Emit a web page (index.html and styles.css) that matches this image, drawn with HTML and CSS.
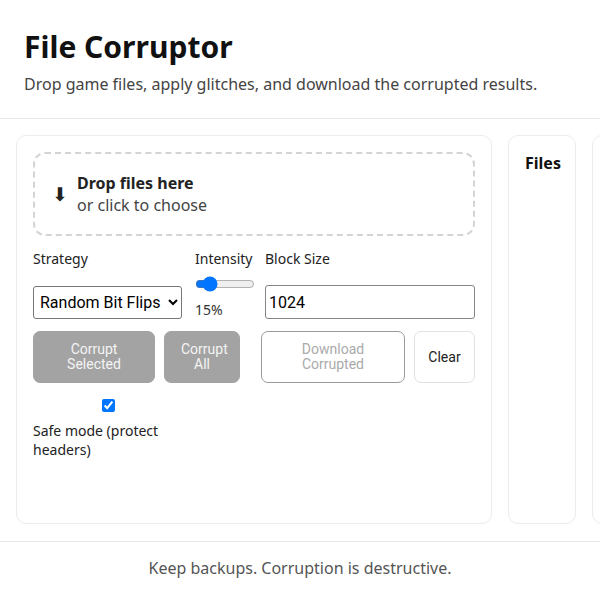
FILE: index.html
```html
<!DOCTYPE html>
<html lang="en">
<head>
<meta charset="utf-8">
<title>File Corruptor</title>
<link rel="stylesheet" href="styles.css">
</head>
<body>
<header class="app-header">
  <h1 class="title">File Corruptor</h1>
  <p class="subtitle">Drop game files, apply glitches, and download the corrupted results.</p>
</header>
<main class="layout">
  <section class="card card-main">
    <div class="dropzone">
      <span class="drop-icon">⬇</span>
      <div class="drop-text">
        <strong class="drop-title">Drop files here</strong>
        <span class="drop-sub">or click to choose</span>
      </div>
    </div>
    <div class="row fields">
      <label class="field field-strategy">
        <span class="field-label">Strategy</span>
        <select class="select">
          <option>Random Bit Flips</option>
        </select>
      </label>
      <label class="field field-intensity">
        <span class="field-label">Intensity</span>
        <input class="range" type="range" min="0" max="100" value="15">
        <span class="range-value">15%</span>
      </label>
      <label class="field field-block">
        <span class="field-label">Block Size</span>
        <input class="text-input" type="text" value="1024">
      </label>
    </div>
    <div class="row actions">
      <button class="btn btn-primary btn-sel" disabled>Corrupt Selected</button>
      <button class="btn btn-primary btn-all" disabled>Corrupt All</button>
      <button class="btn btn-outline btn-dl" disabled>Download Corrupted</button>
      <button class="btn btn-light btn-clear">Clear</button>
    </div>
    <div class="row options">
      <label class="safe">
        <input class="check" type="checkbox" checked>
        <span class="safe-text">Safe mode (protect headers)</span>
      </label>
    </div>
  </section>
  <section class="card card-files">
    <h2 class="card-title">Files</h2>
  </section>
  <section class="card card-extra"></section>
</main>
<footer class="app-footer">Keep backups. Corruption is destructive.</footer>
</body>
</html>
```
FILE: styles.css
```css
html, body {
  margin: 0;
  padding: 0;
}
body {
  font-family: "Noto Sans", "Open Sans", sans-serif;
  color: #111;
  background: #fff;
  min-height: 100vh;
  display: flex;
  flex-direction: column;
  overflow: hidden;
}
.app-header {
  padding: 27px 24px 22px;
  border-bottom: 1px solid #e6e6e6;
}
.title {
  margin: 0;
  font-size: 30px;
  line-height: 40px;
  font-weight: 700;
}
.subtitle {
  margin: 5px 0 0;
  font-size: 16px;
  line-height: 24px;
  color: #444;
}
.layout {
  flex: 1;
  display: grid;
  grid-template-columns: 476px 68px 200px;
  gap: 16px;
  padding: 16px 16px 17px;
}
.card {
  border: 1px solid #ececec;
  border-radius: 10px;
  padding: 16px;
}
.card-main {
  display: flex;
  flex-direction: column;
  gap: 12px;
}
.card-title {
  margin: 0;
  font-size: 16px;
  line-height: 22px;
  font-weight: 700;
}
.dropzone {
  border: 2px dashed #d4d4d4;
  border-radius: 12px;
  padding: 18px 17px;
  display: flex;
  align-items: center;
  gap: 9px;
  margin-bottom: 1px;
}
.drop-icon {
  font-size: 19px;
  line-height: 22px;
  color: #222;
}
.drop-text {
  display: flex;
  flex-direction: column;
  font-size: 16px;
  line-height: 22px;
}
.drop-title {
  font-weight: 700;
  color: #222;
}
.drop-sub {
  color: #444;
}
.row {
  display: flex;
}
.fields {
  gap: 10px;
  align-items: stretch;
}
.actions {
  gap: 9px;
}
.field {
  display: flex;
  flex-direction: column;
  justify-content: space-between;
  gap: 6px;
  font-size: 14px;
  line-height: 19px;
  color: #222;
  min-width: 0;
}
.field-strategy {
  width: 149px;
}
.field-intensity {
  width: 60px;
  margin-left: 3px;
}
.field-block {
  flex: 1;
}
.select {
  font-family: Roboto, "Liberation Sans", sans-serif;
  font-size: 16px;
  height: 33px;
  width: 100%;
  border: 1px solid #767676;
  border-radius: 3px;
  background: #fff;
  color: #000;
  padding: 0 0 0 2px;
}
.range {
  width: 60px;
  margin: 2px 0 2px 0;
}
.range-value {
  color: #333;
}
.text-input {
  font-family: Roboto, "Liberation Sans", sans-serif;
  font-size: 16px;
  height: 34px;
  width: 100%;
  box-sizing: border-box;
  border: 1px solid #858585;
  border-radius: 3px;
  padding: 0 3px;
  color: #000;
}
.btn {
  font-family: Roboto, "Liberation Sans", sans-serif;
  font-size: 14px;
  line-height: 15px;
  border-radius: 7px;
  height: 52px;
  padding: 0 16px;
}
.btn-primary {
  background: #a3a3a3;
  border: 1px solid #a3a3a3;
  color: #f4f4f4;
}
.btn-outline {
  background: #fff;
  border: 1px solid #9a9a9a;
  color: #aaa;
}
.btn-light {
  background: #fff;
  border: 1px solid #e2e2e2;
  color: #222;
}
.btn-sel { width: 122px; }
.btn-all { width: 76px; }
.btn-dl { width: 144px; margin-left: auto; }
.btn-clear { width: 61px; padding: 0 6px; }
.options {
  padding-top: 1px;
}
.safe {
  width: 150px;
  display: flex;
  flex-direction: column;
  font-size: 14px;
  line-height: 19px;
  color: #222;
  gap: 6px;
}
.check {
  margin: 3px auto;
}
.app-footer {
  border-top: 1px solid #e6e6e6;
  text-align: center;
  padding: 14px 16px 20px;
  font-size: 16px;
  line-height: 24px;
  color: #555;
}
```
